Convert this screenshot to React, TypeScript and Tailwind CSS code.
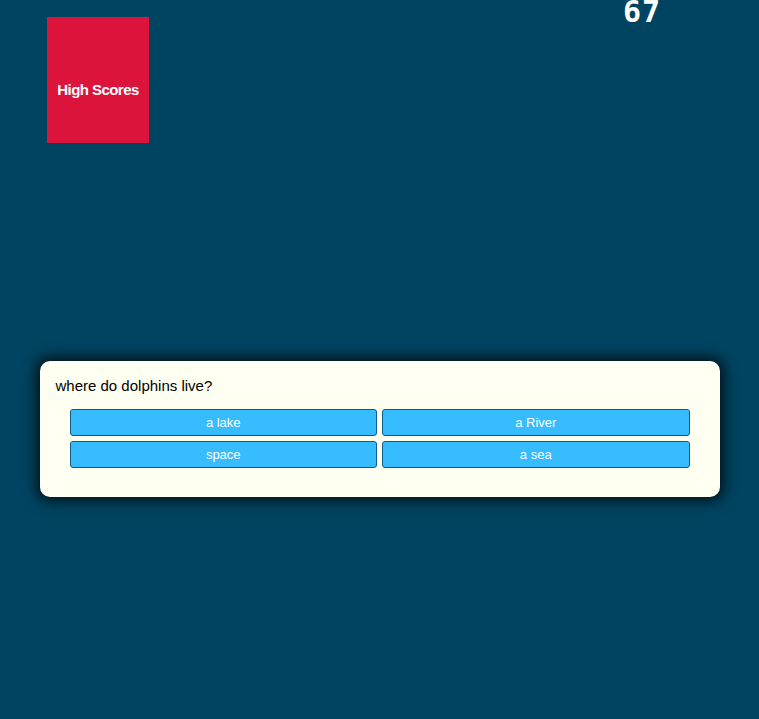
import React from "react";

const answers = ["a lake", "a River", "space", "a sea"];

export default function App() {
  return (
    <div className="min-h-[719px] w-full bg-[#014461] font-['Liberation_Sans',Arial,sans-serif] overflow-hidden">
      {/* Top bar */}
      <div className="flex items-start justify-between pl-[47px] pr-[98px] pt-[17px]">
        <button className="flex h-[126px] w-[102px] items-center justify-center bg-[#dc143c] pt-[20px] text-[15px] font-black tracking-[-0.55px] text-white">
          High Scores
        </button>
        <div className="-mt-[25px] font-['DejaVu_Sans_Mono',monospace] text-[30px] font-bold leading-[40px] tracking-[1px] text-white">
          67
        </div>
      </div>

      {/* Question card */}
      <div className="mx-auto mt-[218px] w-[680px] rounded-[10px] bg-[#fffff2] pb-[29px] pt-[16px] shadow-[0_0_14px_4px_rgba(0,0,0,0.75)]">
        <p className="pl-[16px] text-[15px] leading-[18px] text-black">where do dolphins live?</p>
        <div className="mx-[30px] mt-[14px] grid grid-cols-2 gap-[5px]">
          {answers.map((a) => (
            <button
              key={a}
              className="h-[27px] rounded-[3px] border border-[#0b5f86] bg-[#36bcff] text-[13px] text-white"
            >
              {a}
            </button>
          ))}
        </div>
      </div>
    </div>
  );
}
